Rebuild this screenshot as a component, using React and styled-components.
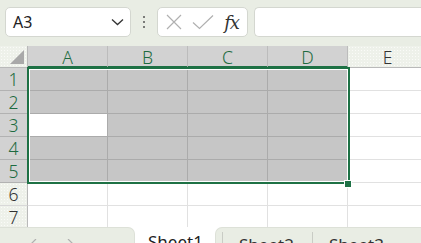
import React from "react";
import styled, { createGlobalStyle } from "styled-components";

const Global = createGlobalStyle`
  html, body { margin: 0; padding: 0; }
  body { width: 421px; height: 243px; overflow: hidden; background: #e9ede4; font-family: "Noto Sans", "Liberation Sans", sans-serif; }
`;

const Page = styled.div`
  width: 421px;
  height: 243px;
  display: flex;
  flex-direction: column;
  overflow: hidden;
  background: #e9ede4;
`;

const Toolbar = styled.div`
  height: 46px;
  box-sizing: border-box;
  display: flex;
  align-items: flex-start;
  padding: 7px 0 0 5px;
  flex-shrink: 0;
`;

const Box = styled.div`
  height: 30px;
  box-sizing: border-box;
  background: #fff;
  border: 1px solid #d4d7d0;
  border-radius: 5px;
  display: flex;
  align-items: center;
`;

const NameBox = styled(Box)`
  width: 126px;
  padding: 0 6px 0 7px;
  justify-content: space-between;
  font-size: 16px;
  color: #222;
`;

const Dots = styled.div`
  width: 26px;
  height: 30px;
  display: flex;
  flex-direction: column;
  align-items: center;
  justify-content: center;
  gap: 2.5px;
  & > span { width: 2.5px; height: 2.5px; background: #555; border-radius: 1px; }
`;

const FormulaButtons = styled(Box)`
  width: 91px;
  padding: 0 6px 0 8px;
  justify-content: space-between;
`;

const Fx = styled.span`
  font-family: "DejaVu Serif", "Liberation Serif", serif;
  font-style: italic;
  font-size: 18px;
  color: #333;
  letter-spacing: -1px;
  margin-right: 2px;
`;

const FormulaInput = styled(Box)`
  flex: 1;
  margin-left: 6px;
  border-right: none;
  border-top-right-radius: 0;
  border-bottom-right-radius: 0;
`;

const GridWrap = styled.div`
  position: relative;
  height: 181px;
  overflow: hidden;
  flex-shrink: 0;
  background: #fff;
`;

const Grid = styled.div`
  display: grid;
  grid-template-columns: 28px repeat(5, 80px);
  grid-template-rows: 22px repeat(7, 23px);
`;

const dotted = `
  background-color: #eef1ea;
  background-image: radial-gradient(#fafbf8 0.8px, transparent 0.9px);
  background-size: 3px 3px;
`;

const Corner = styled.div`
  ${dotted}
  box-sizing: border-box;
  border-right: 1px solid #b9b9b9;
  border-bottom: 1px solid #b9b9b9;
  position: relative;
  &::after {
    content: "";
    position: absolute;
    right: 3px;
    bottom: 3px;
    width: 0;
    height: 0;
    border-left: 14px solid transparent;
    border-bottom: 14px solid #a9a9a9;
  }
`;

const ColHeader = styled.div`
  box-sizing: border-box;
  display: flex;
  align-items: center;
  justify-content: center;
  font-size: 17.5px;
  font-weight: 300;
  padding-top: 1px;
  ${(p) => (p.$sel ? "background: #d2d2d2; color: #1d6b40;" : dotted + "color: #333;")}
  border-right: 1px solid #bcbcbc;
  border-bottom: ${(p) => (p.$sel ? "2px solid #1e7145" : "1px solid #b9b9b9")};
`;

const RowHeader = styled.div`
  box-sizing: border-box;
  display: flex;
  align-items: center;
  justify-content: center;
  font-size: 17.5px;
  font-weight: 300;
  ${(p) => (p.$sel ? "background: #d2d2d2; color: #1d6b40;" : dotted + "color: #333;")}
  border-right: 1px solid #b9b9b9;
  border-bottom: 1px solid ${(p) => (p.$sel ? "#b2b2b2" : "#d8d8d8")};
`;

const Cell = styled.div`
  box-sizing: border-box;
  background: ${(p) => (p.$active ? "#fff" : p.$sel ? "#c6c6c6" : "#fff")};
  border-right: 1px solid ${(p) => (p.$sel ? "#ababab" : "#e1e1e1")};
  border-bottom: 1px solid ${(p) => (p.$sel ? "#ababab" : "#e1e1e1")};
`;

const Selection = styled.div`
  position: absolute;
  left: 27px;
  top: 21px;
  width: 323px;
  height: 117px;
  box-sizing: border-box;
  border: 2px solid #1e7145;
  box-shadow: inset 0 0 0 1px #fff;
  pointer-events: none;
`;

const FillHandle = styled.div`
  position: absolute;
  left: 344px;
  top: 134px;
  width: 8px;
  height: 8px;
  box-sizing: border-box;
  background: #1e7145;
  border: 1px solid #fff;
`;

const TabBar = styled.div`
  flex: 1;
  display: flex;
  align-items: stretch;
  background: #fff;
`;

const NavPanel = styled.div`
  width: 135px;
  box-sizing: border-box;
  background: #e9ede4;
  border-top: 1px solid #dde1d8;
  border-right: 1px solid #dde1d8;
  border-top-right-radius: 7px;
  display: flex;
  align-items: flex-start;
  padding: 11px 0 0 30px;
  gap: 28px;
`;

const ActiveTab = styled.div`
  width: 80px;
  box-sizing: border-box;
  padding: 5px 0 0 13px;
  font-size: 17px;
  color: #222;
  background: #fff;
  line-height: 20px;
`;

const RestPanel = styled.div`
  flex: 1;
  background: #e9ede4;
  border-top: 1px solid #dde1d8;
  border-left: 1px solid #dde1d8;
  border-top-left-radius: 7px;
  display: flex;
  padding-left: 6px;
  padding-top: 4px;
`;

const Tab = styled.div`
  width: 90px;
  box-sizing: border-box;
  border-left: 1px solid #c9ccc5;
  padding-left: 16px;
  padding-top: 3px;
  font-size: 17px;
  color: #333;
  line-height: 20px;
`;

const cols = ["A", "B", "C", "D", "E"];

export default function App() {
  const rows = [1, 2, 3, 4, 5, 6, 7];
  return (
    <Page>
      <Global />
      <Toolbar>
        <NameBox>
          <span>A3</span>
          <svg width="13" height="8" viewBox="0 0 13 8">
            <path d="M1 1.5 L6.5 6.5 L12 1.5" fill="none" stroke="#333" strokeWidth="1.3" />
          </svg>
        </NameBox>
        <Dots>
          <span />
          <span />
          <span />
        </Dots>
        <FormulaButtons>
          <svg width="16" height="16" viewBox="0 0 16 16">
            <path d="M1 1 L15 15 M15 1 L1 15" stroke="#b0b0b0" strokeWidth="1.2" />
          </svg>
          <svg width="22" height="16" viewBox="0 0 22 16">
            <path d="M1 8.5 L7.5 14.5 L21 1.5" fill="none" stroke="#b0b0b0" strokeWidth="1.2" />
          </svg>
          <Fx>fx</Fx>
        </FormulaButtons>
        <FormulaInput />
      </Toolbar>
      <GridWrap>
        <Grid>
          <Corner />
          {cols.map((c, i) => (
            <ColHeader key={c} $sel={i < 4}>
              {c}
            </ColHeader>
          ))}
          {rows.map((r) => (
            <React.Fragment key={r}>
              <RowHeader $sel={r <= 5}>{r}</RowHeader>
              {cols.map((c, i) => (
                <Cell key={c} $sel={r <= 5 && i < 4} $active={r === 3 && i === 0} />
              ))}
            </React.Fragment>
          ))}
        </Grid>
        <Selection />
        <FillHandle />
      </GridWrap>
      <TabBar>
        <NavPanel>
          <svg width="8" height="8" viewBox="0 0 8 8">
            <path d="M6 0 L2 4 L6 8" fill="none" stroke="#b0b0b0" strokeWidth="1.2" />
          </svg>
          <svg width="8" height="8" viewBox="0 0 8 8">
            <path d="M2 0 L6 4 L2 8" fill="none" stroke="#b0b0b0" strokeWidth="1.2" />
          </svg>
        </NavPanel>
        <ActiveTab>Sheet1</ActiveTab>
        <RestPanel>
          <Tab>Sheet2</Tab>
          <Tab>Sheet3</Tab>
        </RestPanel>
      </TabBar>
    </Page>
  );
}
